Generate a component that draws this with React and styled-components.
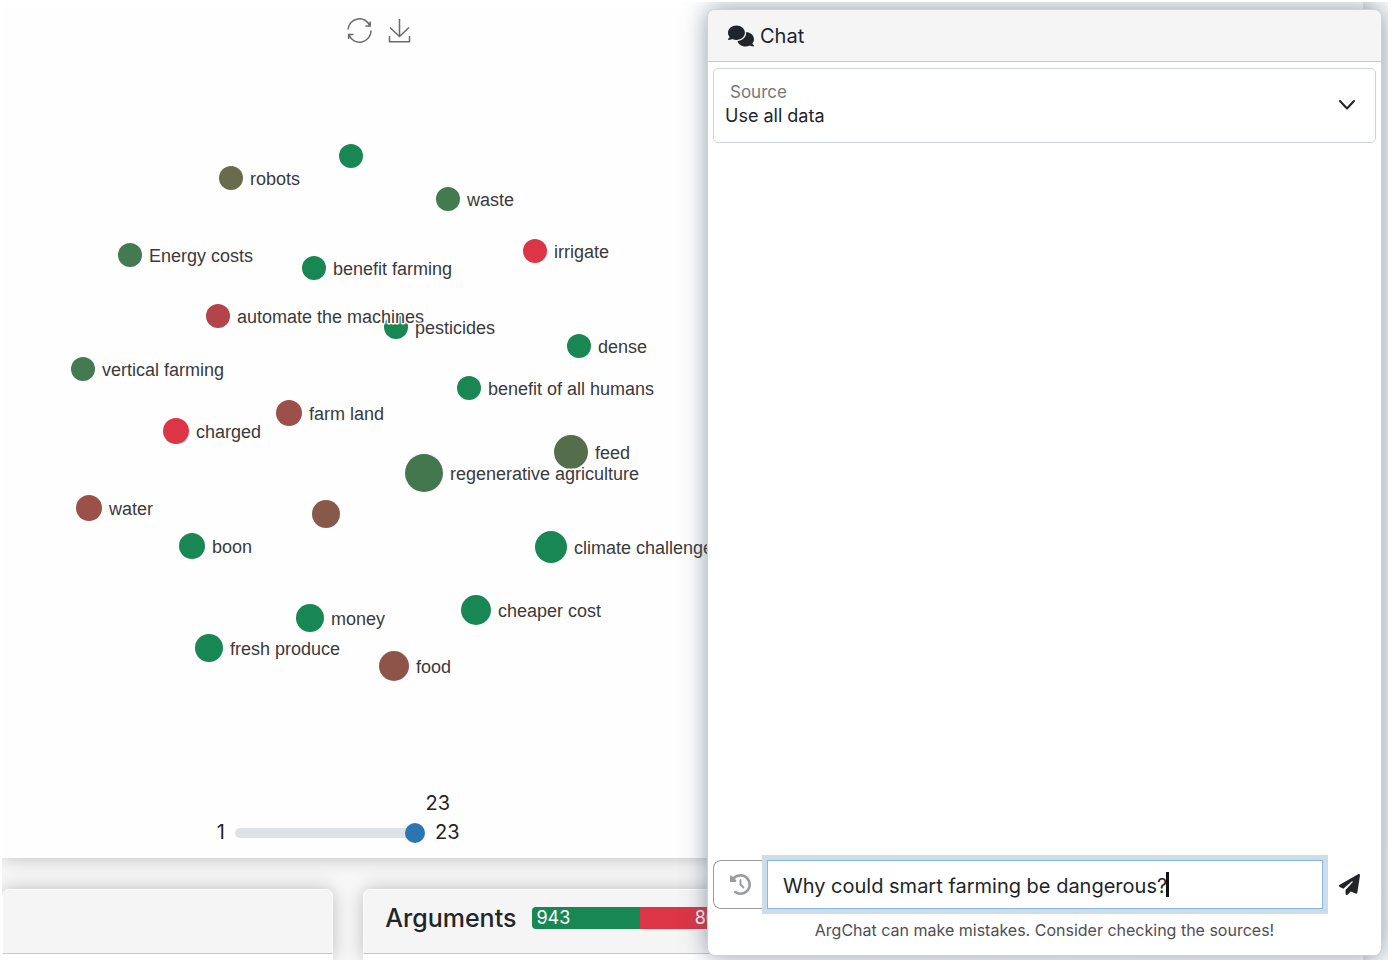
import React, { useLayoutEffect, useRef, useState } from "react";
import styled, { createGlobalStyle } from "styled-components";
import { FaClockRotateLeft, FaComments, FaPaperPlane } from "react-icons/fa6";

const GlobalStyle = createGlobalStyle`
  * { box-sizing: border-box; }
  body {
    margin: 0;
    background: #fff;
    color: #212529;
    font-family: Inter, "Liberation Sans", sans-serif;
    font-size: 20px;
  }
  button, input, select { font: inherit; color: inherit; }
`;

const Frame = styled.div`
  height: 100vh;
  padding: 2px 5px 2px 2px;
`;

const Workspace = styled.main`
  position: relative;
  display: flex;
  flex-direction: column;
  gap: 31px;
  height: 100%;
  padding-right: 25px;
  overflow: hidden;
  background: #f9f9f9;
`;

const GraphCard = styled.section`
  display: flex;
  flex: 1;
  flex-direction: column;
  min-height: 0;
  background: #fefefe;
  box-shadow: 0 0 20px rgba(0, 0, 0, 0.25);
`;

const Toolbar = styled.div`
  display: flex;
  justify-content: center;
  gap: 16px;
  width: calc(55% + 5px);
  padding-top: 16px;
`;

const ToolButton = styled.button`
  display: flex;
  padding: 0;
  border: 0;
  background: none;
  color: #6a6a6a;
  cursor: pointer;
`;

const Graph = styled.svg`
  flex: 1;
  width: 100%;
  min-height: 0;
`;

const NodeLabel = styled.text`
  font-family: "Liberation Sans", Arial, sans-serif;
  font-size: 18px;
  fill: #3a3a3a;
  stroke: #fefefe;
  stroke-width: 3px;
  stroke-linejoin: round;
  paint-order: stroke;
`;

const RangeControl = styled.div`
  display: grid;
  grid-template-columns: 12px 190px 32px;
  column-gap: 10px;
  align-items: center;
  padding: 0 0 11px 211px;
  line-height: 29px;
`;

const RangeMin = styled.span`
  text-align: right;
`;

const RangeValue = styled.output`
  grid-column: 2 / 4;
  justify-self: end;
  padding-right: 17px;
`;

const Range = styled.input`
  appearance: none;
  width: 100%;
  height: 20px;
  margin: 0;
  background: none;
  &::-webkit-slider-runnable-track {
    height: 10px;
    border-radius: 5px;
    background: #dee2e6;
  }
  &::-webkit-slider-thumb {
    appearance: none;
    width: 20px;
    height: 20px;
    margin-top: -5px;
    border-radius: 50%;
    background: #2c75b3;
  }
`;

const CardRow = styled.div`
  display: grid;
  grid-template-columns: calc(25% - 9px) 1fr;
  gap: 30px;
`;

const Card = styled.section`
  height: 71px;
  overflow: hidden;
  border-radius: 8px 8px 0 0;
  background: #fff;
`;

const CardShadow = styled.div`
  border-radius: 8px 8px 0 0;
  box-shadow: 0 0 20px rgba(0, 0, 0, 0.25);
`;

const CardHeader = styled.header`
  display: flex;
  align-items: center;
  gap: 16px;
  height: 65px;
  padding: 0 21px 8px;
  border: 1px solid #fff;
  border-bottom-color: #c6c8ca;
  background: #f5f5f5;
`;

const CardTitle = styled.h2`
  margin: 0;
  font-size: 25px;
  font-weight: 500;
`;

const Meter = styled.div`
  display: flex;
  width: 200px;
  height: 22px;
  overflow: hidden;
  border-radius: 4px;
  color: #fff;
  font-size: 18px;
  line-height: 22px;
`;

const MeterPart = styled.span`
  flex: ${(p) => p.$value};
  padding: 0 4px;
  background: ${(p) => p.$color};
  text-align: ${(p) => p.$align};
`;

const ChatPanel = styled.aside`
  position: absolute;
  top: 7px;
  right: 6px;
  bottom: 4px;
  display: flex;
  flex-direction: column;
  width: calc(50% - 18px);
  border: 1px solid #ced2d6;
  border-radius: 8px;
  background: #fff;
  box-shadow: 0 0 24px rgba(73, 93, 113, 0.6);
`;

const ChatHeader = styled.header`
  display: flex;
  align-items: center;
  gap: 6px;
  height: 52px;
  padding: 0 20px;
  border-bottom: 1px solid #c6c8ca;
  border-radius: 7px 7px 0 0;
  background: #f5f5f5;
`;

const ChatTitle = styled.h2`
  margin: 0;
  font-size: 20px;
  font-weight: 400;
`;

const ChatBody = styled.div`
  display: flex;
  flex: 1;
  flex-direction: column;
  justify-content: space-between;
  padding: 6px 5px 5px;
`;

const SourceField = styled.div`
  position: relative;
`;

const SourceLabel = styled.label`
  position: absolute;
  top: 13px;
  left: 17px;
  color: #75787b;
  font-size: 17px;
  line-height: 22px;
`;

const SourceSelect = styled.select`
  appearance: none;
  display: block;
  width: 100%;
  height: 75px;
  padding: 20px 48px 0 11px;
  border: 1px solid #ced4da;
  border-radius: 5px;
  background: #fff;
  font-size: 18px;
`;

const Chevron = styled.svg`
  position: absolute;
  top: 31px;
  right: 21px;
  pointer-events: none;
`;

const Composer = styled.form`
  display: flex;
  height: 49px;
`;

const HistoryButton = styled.button`
  display: flex;
  align-items: center;
  justify-content: center;
  width: 54px;
  border: 1px solid #999da1;
  border-right: 0;
  border-radius: 8px 0 0 8px;
  background: #fff;
  color: #9a9c9e;
`;

const QuestionField = styled.div`
  position: relative;
  flex: 1;
`;

const QuestionInput = styled.input`
  width: 100%;
  height: 100%;
  padding: 2px 15px 0;
  border: 1px solid #8bb6da;
  border-radius: 0;
  outline: 0;
  background: #fff;
  box-shadow: 0 0 0 5px #cbdde9;
  caret-color: transparent;
`;

const Caret = styled.span`
  position: absolute;
  top: 12px;
  width: 3px;
  height: 25px;
  background: #111;
`;

const SendButton = styled.button`
  display: flex;
  align-items: center;
  justify-content: center;
  width: 53px;
  padding: 0;
  border: 0;
  background: none;
`;

const Disclaimer = styled.p`
  margin: 10px 0 0;
  padding-bottom: 9px;
  color: #4c4f52;
  font-size: 16px;
  line-height: 22px;
  text-align: center;
`;

const nodes = [
  { x: 349, y: 154, r: 12, color: "#198754" },
  { x: 229, y: 176, r: 12, color: "#686b4c", label: "robots" },
  { x: 446, y: 197, r: 12, color: "#437a50", label: "waste" },
  { x: 128, y: 253, r: 12, color: "#437a50", label: "Energy costs" },
  { x: 312, y: 266, r: 12, color: "#198754", label: "benefit farming" },
  { x: 533, y: 249, r: 12, color: "#dc3545", label: "irrigate" },
  { x: 216, y: 314, r: 12, color: "#b34449", label: "automate the machines" },
  { x: 394, y: 325, r: 12, color: "#198754", label: "pesticides" },
  { x: 577, y: 344, r: 12, color: "#198754", label: "dense" },
  { x: 81, y: 367, r: 12, color: "#437a50", label: "vertical farming" },
  { x: 467, y: 386, r: 12, color: "#198754", label: "benefit of all humans" },
  { x: 287, y: 411, r: 13, color: "#9b504a", label: "farm land" },
  { x: 174, y: 429, r: 13, color: "#dc3545", label: "charged" },
  { x: 569, y: 450, r: 17, color: "#546e4c", label: "feed" },
  { x: 422, y: 471, r: 19, color: "#43784f", label: "regenerative agriculture" },
  { x: 87, y: 506, r: 13, color: "#9b504a", label: "water" },
  { x: 324, y: 512, r: 14, color: "#87594b" },
  { x: 190, y: 544, r: 13, color: "#198754", label: "boon" },
  { x: 549, y: 545, r: 16, color: "#198754", label: "climate challenges" },
  { x: 308, y: 616, r: 14, color: "#198754", label: "money" },
  { x: 474, y: 608, r: 15, color: "#198754", label: "cheaper cost" },
  { x: 207, y: 646, r: 14, color: "#198754", label: "fresh produce" },
  { x: 392, y: 664, r: 15, color: "#8f5449", label: "food" },
];

const TOOLBAR_HEIGHT = 41;

function ConceptGraph() {
  return (
    <Graph role="img" aria-label="Concept graph">
      <g transform={`translate(0 ${-TOOLBAR_HEIGHT})`}>
        {nodes.map((n) => (
          <circle key={`${n.x}-${n.y}`} cx={n.x} cy={n.y} r={n.r} fill={n.color} />
        ))}
        {nodes
          .filter((n) => n.label)
          .map((n) => (
            <NodeLabel key={n.label} x={n.x + n.r + 7} y={n.y + 7}>
              {n.label}
            </NodeLabel>
          ))}
      </g>
    </Graph>
  );
}

function RefreshIcon() {
  return (
    <svg width="25" height="25" viewBox="0 0 25 25" fill="none" stroke="currentColor" strokeWidth="1.5">
      <path d="M1 11.5A11.4 11.4 0 0 1 23 8M23.2 3.5v4.6h-4.8" />
      <path d="M24 12.5A11.4 11.4 0 0 1 2 17M1.6 21v-4.6h4.8" />
    </svg>
  );
}

function DownloadIcon() {
  return (
    <svg width="23" height="25" viewBox="0 0 23 25" fill="none" stroke="currentColor" strokeWidth="1.5">
      <path d="M11.5 1v17.5M2 9.5l9.5 9 9.5-9M1.5 18v5.7h20V18" />
    </svg>
  );
}

function QuestionBox() {
  const [question, setQuestion] = useState("Why could smart farming be dangerous?");
  const [caretLeft, setCaretLeft] = useState(0);
  const inputRef = useRef(null);

  useLayoutEffect(() => {
    const style = getComputedStyle(inputRef.current);
    const context = document.createElement("canvas").getContext("2d");
    context.font = `${style.fontSize} ${style.fontFamily}`;
    setCaretLeft(Math.round(context.measureText(question).width) + 15);
  }, [question]);

  return (
    <QuestionField>
      <QuestionInput
        ref={inputRef}
        aria-label="Question"
        value={question}
        onChange={(e) => setQuestion(e.target.value)}
      />
      <Caret style={{ left: caretLeft }} />
    </QuestionField>
  );
}

export default function App() {
  const [count, setCount] = useState(23);

  return (
    <Frame>
      <GlobalStyle />
      <Workspace>
        <GraphCard>
          <Toolbar>
            <ToolButton type="button" aria-label="Refresh">
              <RefreshIcon />
            </ToolButton>
            <ToolButton type="button" aria-label="Download">
              <DownloadIcon />
            </ToolButton>
          </Toolbar>
          <ConceptGraph />
          <RangeControl>
            <RangeValue htmlFor="count">{count}</RangeValue>
            <RangeMin>1</RangeMin>
            <Range
              id="count"
              type="range"
              aria-label="Number of concepts"
              min="1"
              max="23"
              value={count}
              onChange={(e) => setCount(Number(e.target.value))}
            />
            <span>23</span>
          </RangeControl>
        </GraphCard>

        <CardRow>
          <CardShadow>
            <Card>
              <CardHeader />
            </Card>
          </CardShadow>
          <CardShadow>
            <Card>
              <CardHeader>
                <CardTitle>Arguments</CardTitle>
                <Meter>
                  <MeterPart $value={943} $color="#198754" $align="left">943</MeterPart>
                  <MeterPart $value={806} $color="#dc3545" $align="right">806</MeterPart>
                </Meter>
              </CardHeader>
            </Card>
          </CardShadow>
        </CardRow>

        <ChatPanel>
          <ChatHeader>
            <FaComments size={26} />
            <ChatTitle>Chat</ChatTitle>
          </ChatHeader>
          <ChatBody>
            <SourceField>
              <SourceSelect id="source">
                <option>Use all data</option>
              </SourceSelect>
              <SourceLabel htmlFor="source">Source</SourceLabel>
              <Chevron width="16" height="12" viewBox="0 0 16 12" fill="none" stroke="#212529" strokeWidth="2" strokeLinecap="round" strokeLinejoin="round">
                <path d="M1 2l7 7.5L15 2" />
              </Chevron>
            </SourceField>
            <div>
              <Composer onSubmit={(e) => e.preventDefault()}>
                <HistoryButton type="button" aria-label="History">
                  <FaClockRotateLeft size={21} />
                </HistoryButton>
                <QuestionBox />
                <SendButton type="submit" aria-label="Send">
                  <FaPaperPlane size={21} />
                </SendButton>
              </Composer>
              <Disclaimer>ArgChat can make mistakes. Consider checking the sources!</Disclaimer>
            </div>
          </ChatBody>
        </ChatPanel>
      </Workspace>
    </Frame>
  );
}
